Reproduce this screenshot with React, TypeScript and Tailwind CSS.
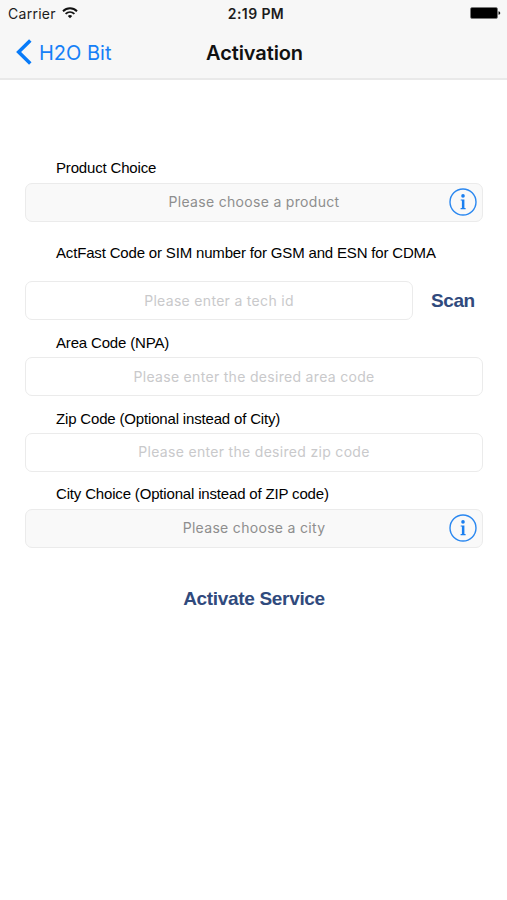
import type { ReactNode } from 'react';

function InfoButton() {
  return (
    <button type="button" aria-label="More info" className="absolute right-[5px] top-1 h-7 w-7">
      <svg viewBox="0 0 28 28" className="h-7 w-7" fill="none">
        <circle cx="14" cy="14" r="13" stroke="#2b88f0" strokeWidth="1.4" />
        <circle cx="14" cy="7.9" r="1.8" fill="#1a7ff0" />
        <path d="M11.7 11.4H15.4V20.1H16.6V21.2H11.6V20.1H12.9V12.5H11.7Z" fill="#1a7ff0" />
      </svg>
    </button>
  );
}

function Label({ children, className = '' }: { children: ReactNode; className?: string }) {
  return (
    <div className={`ml-[31px] flex h-5 items-center whitespace-nowrap text-[15px] tracking-[-0.17px] text-black ${className}`}>
      {children}
    </div>
  );
}

function Picker({ text, className }: { text: string; className: string }) {
  return (
    <div className={`relative flex h-[39px] w-full items-center justify-center rounded-[7px] border border-[#ebebeb] bg-[#f9f9f9] pb-0.5 font-['Inter',sans-serif] ${className}`}>
      <span className="whitespace-nowrap text-[14px] tracking-[0.31px] text-[#8e8e8e]">{text}</span>
      <InfoButton />
    </div>
  );
}

function Field({ text, className }: { text: string; className: string }) {
  return (
    <div className={`flex h-[39px] items-center justify-center rounded-[7px] border border-[#ebebeb] bg-white font-['Inter',sans-serif] ${className}`}>
      <span className="whitespace-nowrap text-[14px] tracking-[0.31px] text-[#c9c9cb]">{text}</span>
    </div>
  );
}

export default function App() {
  return (
    <div className="h-[900px] w-[507px] overflow-hidden bg-white font-['Liberation_Sans',Arial,sans-serif]">
      <header className="h-20 border-b-2 border-[#e9e9e9] bg-[#f7f7f7] font-['Inter',sans-serif]">
        <div className="grid h-[26px] grid-cols-3 items-center">
          <div className="flex items-center gap-[6px] pl-2">
            <span className="text-[14px] tracking-[0.28px] text-[#1c1c1c]">Carrier</span>
            <svg viewBox="0 0 16 12" className="h-3 w-4" fill="none" stroke="#111" strokeWidth="1.9">
              <path d="M1 4.2C5 .3 11 .3 15 4.2" />
              <path d="M3.6 6.9C6.2 4.5 9.8 4.5 12.4 6.9" />
              <path d="M5.8 8.9C7.1 7.8 8.9 7.8 10.2 8.9L8 11.3Z" fill="#111" stroke="none" />
            </svg>
          </div>
          <span className="pl-[5px] text-center text-[14px] font-semibold tracking-[0.4px] text-[#1c1c1c]">2:19 PM</span>
          <div className="flex items-center justify-end pr-[6px]">
            <svg viewBox="0 0 31 12" className="h-3 w-[31px]">
              <rect x=".5" y=".5" width="27" height="11" rx="1.5" fill="#000" stroke="#777" strokeWidth=".7" />
              <path d="M28.5 4.2C30.8 4.5 30.8 7.5 28.5 7.8Z" fill="#111" />
            </svg>
          </div>
        </div>
        <div className="grid h-[52px] grid-cols-3 items-center pt-0.5">
          <button type="button" className="flex items-center gap-[7px] pl-4 text-[#1580f7]">
            <svg viewBox="0 0 16 26" className="-mt-0.5 h-[26px] w-4" fill="none" stroke="#087bf9" strokeWidth="3.5">
              <path d="M14.3 1.4L2.6 13L14.3 24.6" />
            </svg>
            <span className="whitespace-nowrap text-[20px]">H2O Bit</span>
          </button>
          <h1 className="pl-0.5 text-center text-[20px] font-semibold tracking-[-0.1px] text-[#111]">Activation</h1>
        </div>
      </header>

      <main className="flex flex-col pl-[25px] pr-6 pt-[78px]">
        <Label>Product Choice</Label>
        <Picker text="Please choose a product" className="mt-[5px]" />
        <Label className="mt-[21px]">ActFast Code or SIM number for GSM and ESN for CDMA</Label>
        <div className="mt-[18px] flex items-center">
          <Field text="Please enter a tech id" className="w-[388px]" />
          <button type="button" className="ml-[18px] pt-0.5 text-[19px] font-bold tracking-[-0.4px] text-[#304a7d]">Scan</button>
        </div>
        <Label className="mt-[13px]">Area Code (NPA)</Label>
        <Field text="Please enter the desired area code" className="mt-1 w-full" />
        <Label className="mt-[13px]">Zip Code (Optional instead of City)</Label>
        <Field text="Please enter the desired zip code" className="mt-1 w-full pb-0.5" />
        <Label className="mt-3">City Choice (Optional instead of ZIP code)</Label>
        <Picker text="Please choose a city" className="mt-[5px]" />
        <button type="button" className="mt-[37px] self-center text-[19px] font-bold tracking-[-0.32px] text-[#304a7d]">Activate Service</button>
      </main>
    </div>
  );
}
